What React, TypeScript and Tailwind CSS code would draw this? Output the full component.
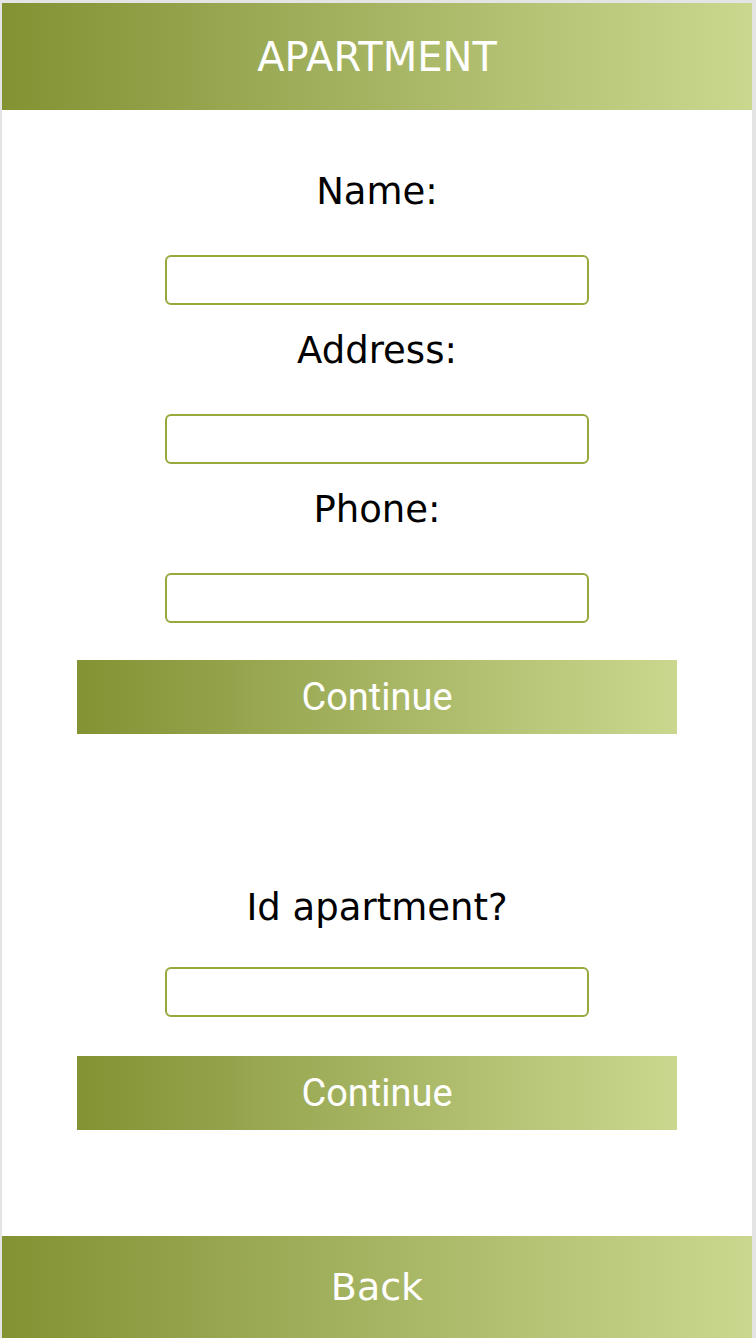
import React, { useState } from "react";

function Field({ label, value, onChange }: { label: string; value: string; onChange: (v: string) => void }) {
  return (
    <div className="flex flex-col items-center">
      <label className="text-[37px] leading-[50px] text-black">{label}</label>
      <input
        value={value}
        onChange={(e) => onChange(e.target.value)}
        className="mt-[38px] h-[50px] w-[424px] rounded-[6px] border-2 border-[#97a83c] bg-white px-3 text-[22px] outline-none"
      />
    </div>
  );
}

function GreenButton({ children }: { children: React.ReactNode }) {
  return (
    <button className="h-[74px] w-[600px] bg-linear-to-r from-[#839232] to-[#cad88f] font-['Roboto',sans-serif] text-[38px] text-white">
      {children}
    </button>
  );
}

export default function App() {
  const [name, setName] = useState("");
  const [address, setAddress] = useState("");
  const [phone, setPhone] = useState("");
  const [id, setId] = useState("");

  return (
    <div className="flex h-[1338px] flex-col bg-[#e4e4e4] pl-[2px] pr-[4px] pt-[3px] font-['DejaVu_Sans',sans-serif]">
      <div className="flex flex-1 flex-col bg-white">
        <header className="flex h-[107px] items-center justify-center bg-linear-to-r from-[#839232] to-[#cad88f]">
          <h1 className="text-[40px] text-white">APARTMENT</h1>
        </header>

        <div className="mt-[57px] flex flex-col items-center">
          <Field label="Name:" value={name} onChange={setName} />
          <div className="mt-[21px]">
            <Field label="Address:" value={address} onChange={setAddress} />
          </div>
          <div className="mt-[21px]">
            <Field label="Phone:" value={phone} onChange={setPhone} />
          </div>
          <div className="mt-[37px]">
            <GreenButton>Continue</GreenButton>
          </div>

          <div className="mt-[149px] flex flex-col items-center">
            <label className="text-[37px] leading-[50px] text-black">Id apartment?</label>
            <input
              value={id}
              onChange={(e) => setId(e.target.value)}
              className="mt-[34px] h-[50px] w-[424px] rounded-[6px] border-2 border-[#97a83c] bg-white px-3 text-[22px] outline-none"
            />
          </div>
          <div className="mt-[39px]">
            <GreenButton>Continue</GreenButton>
          </div>
        </div>

        <button className="mt-auto flex h-[102px] items-center justify-center bg-linear-to-r from-[#839232] to-[#cad88f] text-[38px] text-white">
          Back
        </button>
      </div>
    </div>
  );
}
